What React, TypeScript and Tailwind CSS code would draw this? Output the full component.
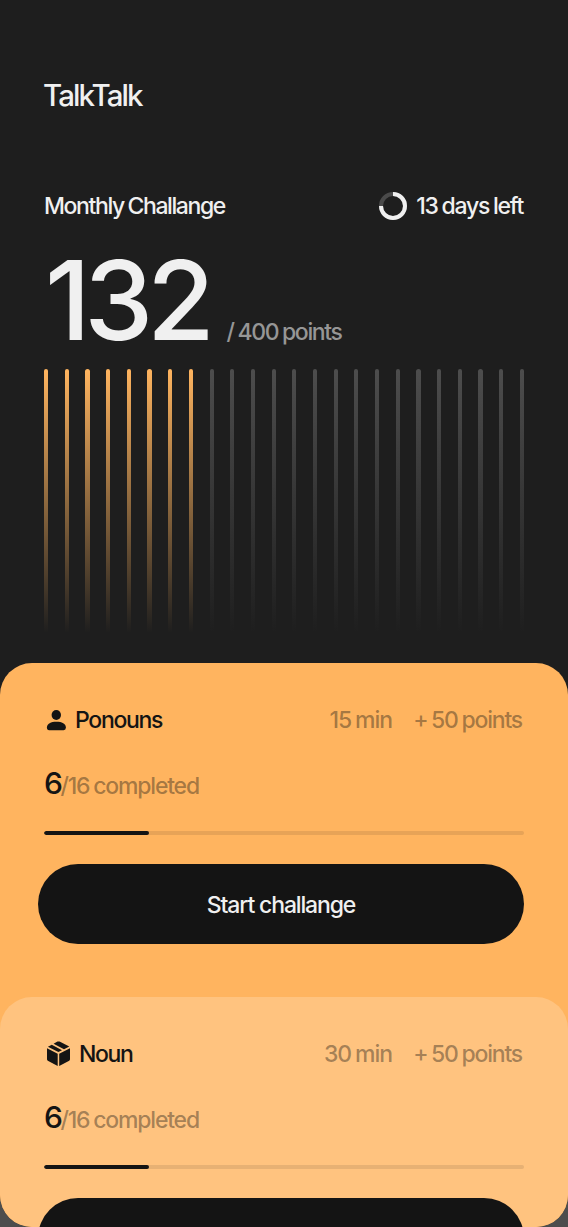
const TOTAL_BARS = 24;
const FILLED_BARS = 8;

function PersonIcon() {
  return (
    <svg className="h-6 w-6 shrink-0" viewBox="0 0 24 24" fill="#141414">
      <ellipse cx="12.3" cy="7" rx="4.7" ry="5" />
      <path d="M2.9 19.6C2.9 15.6 7 13.8 12.4 13.8S21.9 15.6 21.9 19.6Q21.9 22.2 19.6 22.2H5.2Q2.9 22.2 2.9 19.6Z" />
    </svg>
  );
}

function BoxIcon() {
  return (
    <svg className="h-[30px] w-[30px] shrink-0" viewBox="0 0 30 30" fill="#141414">
      <path d="M3 9.2 13.7 14.8V27L3.8 21.7Q3 21.3 3 20.3Z" />
      <path d="M26 9.2 15.2 14.8V27L25.2 21.7Q26 21.3 26 20.3Z" />
      <path d="M3.9 7.8 7.8 5.7 18 11.2 14.4 13.1Z" />
      <path d="M9.6 4.7 13.5 2.6Q14.5 2.2 15.5 2.6L25.3 7.6 20 10.3Z" />
    </svg>
  );
}

type LessonProps = {
  kind: "person" | "box";
  name: string;
  duration: string;
};

function Lesson({ kind, name, duration }: LessonProps) {
  return (
    <div className="flex h-[334px] shrink-0 flex-col pt-[41px]">
      <div className="mx-11 flex h-8 items-center justify-between">
        <div className="flex items-center text-[#141414]">
          {kind === "person" ? <PersonIcon /> : <BoxIcon />}
          <span className={kind === "person" ? "ml-[7px] tracking-[-1.3px]" : "ml-[5px] tracking-[-1.4px]"}>{name}</span>
        </div>
        <div className="mr-[2px] flex gap-[21px] tracking-[-1.2px] text-[#141414]/40 [word-spacing:-1.2px]">
          <span className="tracking-[-1px]">{duration}</span>
          <span>+ 50 points</span>
        </div>
      </div>
      <div className="mx-11 mt-[27px] flex h-10 items-baseline leading-10">
        <span className="text-[30px] tracking-[-2.5px] text-[#141414]">6</span>
        <span className="tracking-[-1.2px] text-[#141414]/40 [word-spacing:-1px]">/16 completed</span>
      </div>
      <div className="mx-11 mt-7 h-1 shrink-0 overflow-hidden rounded-full bg-[#141414]/10">
        <div className="h-1 w-[105px] rounded-full bg-[#141414]" />
      </div>
      <button className="ml-[38px] mr-11 mt-[29px] h-20 shrink-0 rounded-full bg-[#141414] pt-[2px] tracking-[-1.15px] text-[#f0f0f0]">
        Start challange
      </button>
    </div>
  );
}

export default function App() {
  return (
    <div className="h-[1227px] w-[568px] overflow-hidden bg-[#4d4d4d] font-['Inter',sans-serif] text-[23px] font-medium tracking-[-1.15px] whitespace-nowrap text-[#f0f0f0]">
      <header className="flex h-[703px] flex-col bg-[#1e1e1e] px-11 pt-[75px]">
        <h1 className="-ml-px h-10 text-[29.5px] leading-10 font-[550] tracking-[-1.9px]">TalkTalk</h1>
        <div className="mt-[75px] flex h-8 items-center justify-between">
          <span className="tracking-[-1.4px] [word-spacing:-1px]">Monthly Challange</span>
          <div className="mr-px flex items-center gap-[9px]">
            <svg className="h-7 w-7" viewBox="0 0 28 28" fill="none" strokeWidth="4">
              <circle cx="14" cy="14" r="12" stroke="#4a4a4a" />
              <path d="M14 2A12 12 0 1 1 2 14" stroke="#f0f0f0" />
            </svg>
            <span className="tracking-[-1.25px] [word-spacing:-1px]">13 days left</span>
          </div>
        </div>
        <div className="mt-[18px] flex h-[120px] items-baseline leading-[120px]">
          <span className="ml-px text-[110px] font-[550] tracking-[-6.3px]">132</span>
          <span className="ml-[18px] tracking-[-1.35px] text-[#969696] [word-spacing:-1px]">/ 400 points</span>
        </div>
        <div className="mt-[9px] flex h-[264px] justify-between">
          {Array.from({ length: TOTAL_BARS }, (_, i) => (
            <div
              key={i}
              className={
                i < FILLED_BARS
                  ? "w-[4.17px] rounded-full bg-linear-to-b/srgb from-[#ffb45f] to-[#ffb45f]/0"
                  : "w-[4.17px] rounded-full bg-linear-to-b/srgb from-[#4d4d4d] to-[#4d4d4d]/0"
              }
            />
          ))}
        </div>
      </header>
      <main className="relative -mt-10 h-[564px] overflow-hidden rounded-[32px] bg-[#ffb45f]">
        <Lesson kind="person" name="Ponouns" duration="15 min" />
        <section className="h-[230px] overflow-hidden rounded-[32px] bg-[#ffc37f]">
          <Lesson kind="box" name="Noun" duration="30 min" />
        </section>
      </main>
    </div>
  );
}
